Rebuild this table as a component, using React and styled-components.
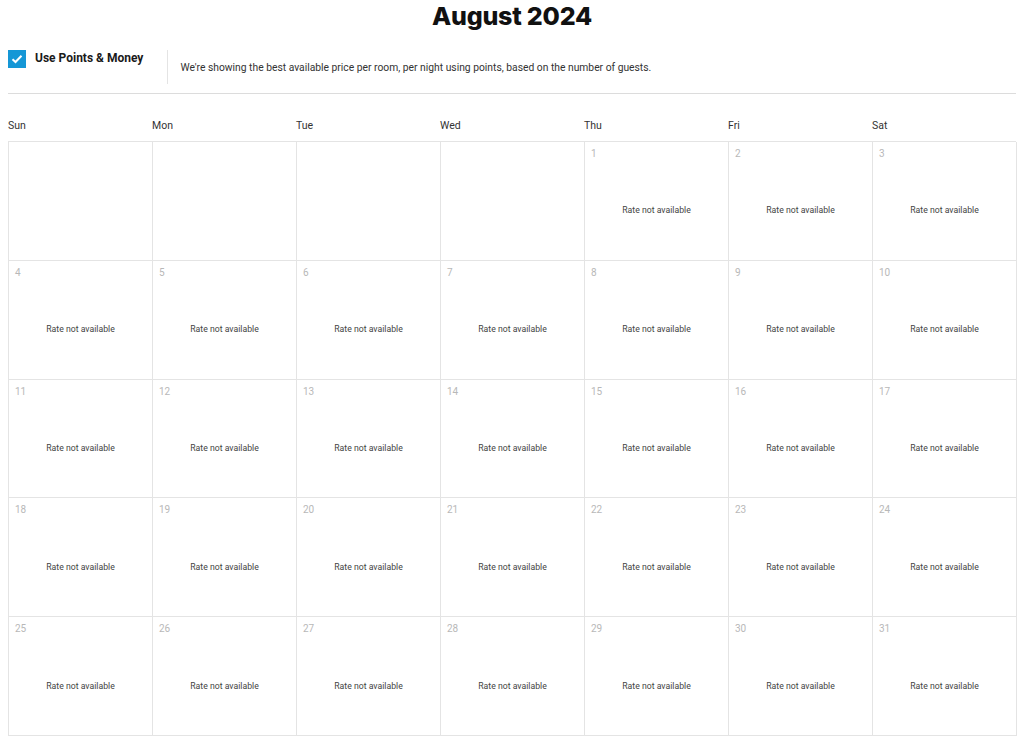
import React from "react";
import styled, { createGlobalStyle } from "styled-components";

const Global = createGlobalStyle`
  html, body { margin: 0; padding: 0; background: #fff; }
  body { font-family: Roboto, "Liberation Sans", Arial, sans-serif; color: #222; }
  * { box-sizing: border-box; }
`;

const Page = styled.div`
  padding: 0 8px;
  width: 1024px;
`;

const Title = styled.h1`
  margin: 0;
  height: 32px;
  line-height: 32px;
  text-align: center;
  font-family: Inter, Roboto, "Liberation Sans", sans-serif;
  font-weight: 800;
  font-size: 25px;
  letter-spacing: -0.2px;
  color: #111;
`;

const Options = styled.div`
  display: flex;
  align-items: flex-start;
  margin-top: 18px;
  height: 34px;
`;

const Check = styled.div`
  width: 18px;
  height: 18px;
  background: #1597d6;
  display: flex;
  align-items: center;
  justify-content: center;
  flex-shrink: 0;
`;

const Label = styled.span`
  margin-left: 9px;
  font-size: 12px;
  font-weight: 700;
  line-height: 16px;
  color: #1a1a1a;
`;

const Divider = styled.div`
  width: 1px;
  height: 34px;
  background: #e4e4e4;
  margin-left: 24px;
`;

const Desc = styled.span`
  margin-left: 12px;
  margin-top: 11px;
  font-size: 10.3px;
  line-height: 14px;
  color: #333;
`;

const Rule = styled.hr`
  margin: 9px 0 0;
  border: 0;
  border-top: 1px solid #dcdcdc;
`;

const Weekdays = styled.div`
  display: grid;
  grid-template-columns: repeat(7, 144px);
  margin-top: 25px;
  height: 22px;
`;

const Weekday = styled.div`
  font-size: 10.5px;
  line-height: 14px;
  color: #333;
`;

const Grid = styled.div`
  display: grid;
  grid-template-columns: repeat(7, 144px);
  grid-template-rows: repeat(5, 118.8px);
  border-top: 1px solid #e4e4e4;
  border-left: 1px solid #e4e4e4;
  width: 1008px;
`;

const Cell = styled.div`
  border-right: 1px solid #e4e4e4;
  border-bottom: 1px solid #e4e4e4;
  display: flex;
  flex-direction: column;
  padding: 5px 6px 0;
`;

const DayNum = styled.div`
  font-size: 10px;
  line-height: 14px;
  color: #b8b8b8;
  height: 14px;
`;

const Rate = styled.div`
  flex: 1;
  display: flex;
  align-items: center;
  justify-content: center;
  font-size: 8.7px;
  color: #444;
`;

const days = ["Sun", "Mon", "Tue", "Wed", "Thu", "Fri", "Sat"];

export default function App() {
  const cells = [];
  for (let i = 0; i < 35; i++) {
    const d = i - 3;
    cells.push(
      <Cell key={i}>
        {d >= 1 && d <= 31 && (
          <>
            <DayNum>{d}</DayNum>
            <Rate>Rate not available</Rate>
          </>
        )}
      </Cell>
    );
  }
  return (
    <Page>
      <Global />
      <Title>August 2024</Title>
      <Options>
        <Check>
          <svg width="12" height="10" viewBox="0 0 12 10">
            <path d="M1.5 5.2 L4.5 8 L10.5 1.8" fill="none" stroke="#fff" strokeWidth="2" />
          </svg>
        </Check>
        <Label>Use Points &amp; Money</Label>
        <Divider />
        <Desc>We're showing the best available price per room, per night using points, based on the number of guests.</Desc>
      </Options>
      <Rule />
      <Weekdays>
        {days.map((d) => (
          <Weekday key={d}>{d}</Weekday>
        ))}
      </Weekdays>
      <Grid>{cells}</Grid>
    </Page>
  );
}
